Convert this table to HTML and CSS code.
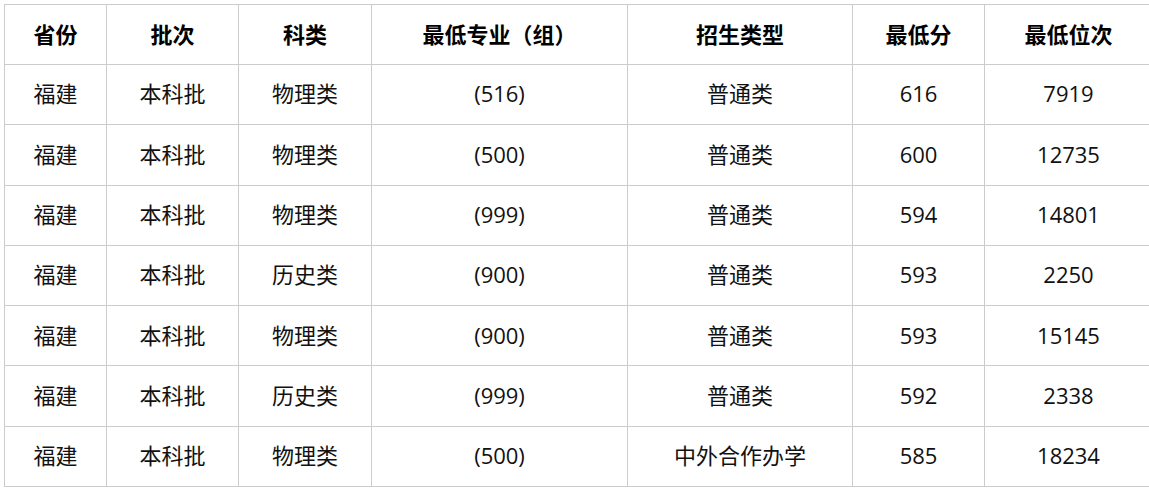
FILE: index.html
```html
<!DOCTYPE html>
<html lang="zh">
<head>
<meta charset="utf-8">
<link rel="stylesheet" href="styles.css">
</head>
<body>
<table class="score-table">
  <colgroup>
    <col class="c1"><col class="c2"><col class="c3"><col class="c4"><col class="c5"><col class="c6"><col class="c7">
  </colgroup>
  <thead>
    <tr><th>省份</th><th>批次</th><th>科类</th><th>最低专业（组）</th><th>招生类型</th><th>最低分</th><th>最低位次</th></tr>
  </thead>
  <tbody>
    <tr><td>福建</td><td>本科批</td><td>物理类</td><td>(516)</td><td>普通类</td><td>616</td><td>7919</td></tr>
    <tr><td>福建</td><td>本科批</td><td>物理类</td><td>(500)</td><td>普通类</td><td>600</td><td>12735</td></tr>
    <tr><td>福建</td><td>本科批</td><td>物理类</td><td>(999)</td><td>普通类</td><td>594</td><td>14801</td></tr>
    <tr><td>福建</td><td>本科批</td><td>历史类</td><td>(900)</td><td>普通类</td><td>593</td><td>2250</td></tr>
    <tr><td>福建</td><td>本科批</td><td>物理类</td><td>(900)</td><td>普通类</td><td>593</td><td>15145</td></tr>
    <tr><td>福建</td><td>本科批</td><td>历史类</td><td>(999)</td><td>普通类</td><td>592</td><td>2338</td></tr>
    <tr><td>福建</td><td>本科批</td><td>物理类</td><td>(500)</td><td>中外合作办学</td><td>585</td><td>18234</td></tr>
  </tbody>
</table>
</body>
</html>
```
FILE: styles.css
```css
html, body {
  margin: 0;
  padding: 0;
  background: #fff;
}
body {
  padding: 4px 0 0 4px;
  font-family: "Open Sans", "Noto Sans CJK SC", sans-serif;
  color: #111;
  overflow: hidden;
}
.score-table {
  border-collapse: collapse;
  table-layout: fixed;
  width: 1148px;
  font-size: 22px;
}
.c1 { width: 102px; }
.c2 { width: 132px; }
.c3 { width: 133px; }
.c4 { width: 256px; }
.c5 { width: 225px; }
.c6 { width: 132px; }
.c7 { width: 168px; }
.score-table th,
.score-table td {
  border: 1px solid #ccc;
  text-align: center;
  vertical-align: middle;
  padding: 0 0 1px;
  height: 58px;
  line-height: 1.2;
}
.score-table th {
  font-weight: 700;
  color: #000;
}
.score-table tbody tr td {
  padding-bottom: 2px;
  height: 57.3px;
}
```
